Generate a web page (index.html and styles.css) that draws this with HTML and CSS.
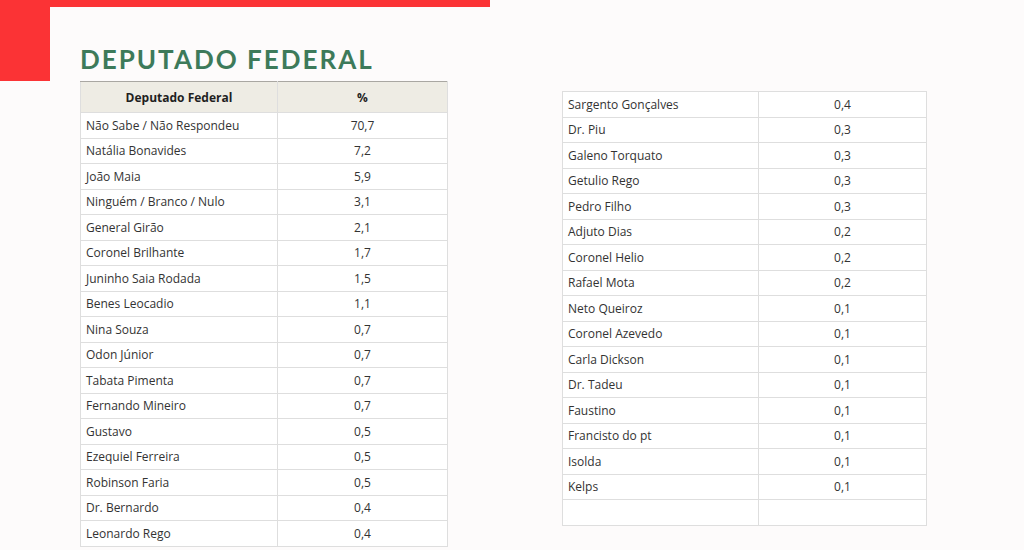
FILE: index.html
```html
<!DOCTYPE html>
<html lang="pt-BR">
<head>
<meta charset="utf-8">
<title>Deputado Federal</title>
<link rel="stylesheet" href="styles.css">
</head>
<body>
<div class="page">
  <div class="topbar"></div>
  <div class="content">
    <div class="redblock"></div>
    <div class="col-left">
      <h1 class="title">DEPUTADO FEDERAL</h1>
      <table class="tbl tbl-left">
        <colgroup><col class="c1"><col class="c2"></colgroup>
        <thead>
          <tr><th>Deputado Federal</th><th>%</th></tr>
        </thead>
        <tbody>
          <tr><td>Não Sabe / Não Respondeu</td><td>70,7</td></tr>
          <tr><td>Natália Bonavides</td><td>7,2</td></tr>
          <tr><td>João Maia</td><td>5,9</td></tr>
          <tr><td>Ninguém / Branco / Nulo</td><td>3,1</td></tr>
          <tr><td>General Girão</td><td>2,1</td></tr>
          <tr><td>Coronel Brilhante</td><td>1,7</td></tr>
          <tr><td>Juninho Saia Rodada</td><td>1,5</td></tr>
          <tr><td>Benes Leocadio</td><td>1,1</td></tr>
          <tr><td>Nina Souza</td><td>0,7</td></tr>
          <tr><td>Odon Júnior</td><td>0,7</td></tr>
          <tr><td>Tabata Pimenta</td><td>0,7</td></tr>
          <tr><td>Fernando Mineiro</td><td>0,7</td></tr>
          <tr><td>Gustavo</td><td>0,5</td></tr>
          <tr><td>Ezequiel Ferreira</td><td>0,5</td></tr>
          <tr><td>Robinson Faria</td><td>0,5</td></tr>
          <tr><td>Dr. Bernardo</td><td>0,4</td></tr>
          <tr><td>Leonardo Rego</td><td>0,4</td></tr>
        </tbody>
      </table>
    </div>
    <div class="col-right">
      <table class="tbl tbl-right">
        <colgroup><col class="c1"><col class="c2"></colgroup>
        <tbody>
          <tr><td>Sargento Gonçalves</td><td>0,4</td></tr>
          <tr><td>Dr. Piu</td><td>0,3</td></tr>
          <tr><td>Galeno Torquato</td><td>0,3</td></tr>
          <tr><td>Getulio Rego</td><td>0,3</td></tr>
          <tr><td>Pedro Filho</td><td>0,3</td></tr>
          <tr><td>Adjuto Dias</td><td>0,2</td></tr>
          <tr><td>Coronel Helio</td><td>0,2</td></tr>
          <tr><td>Rafael Mota</td><td>0,2</td></tr>
          <tr><td>Neto Queiroz</td><td>0,1</td></tr>
          <tr><td>Coronel Azevedo</td><td>0,1</td></tr>
          <tr><td>Carla Dickson</td><td>0,1</td></tr>
          <tr><td>Dr. Tadeu</td><td>0,1</td></tr>
          <tr><td>Faustino</td><td>0,1</td></tr>
          <tr><td>Francisto do pt</td><td>0,1</td></tr>
          <tr><td>Isolda</td><td>0,1</td></tr>
          <tr><td>Kelps</td><td>0,1</td></tr>
          <tr><td>&nbsp;</td><td>&nbsp;</td></tr>
        </tbody>
      </table>
    </div>
  </div>
</div>
</body>
</html>
```

FILE: styles.css
```css
* { box-sizing: border-box; }
html, body {
  margin: 0;
  padding: 0;
  background: #fdfbfb;
  width: 1024px;
  height: 550px;
  overflow: hidden;
}
.page {
  width: 1024px;
  height: 550px;
}
.topbar {
  width: 490px;
  height: 7px;
  background: #fb3335;
}
.content {
  display: flex;
  align-items: flex-start;
}
.redblock {
  width: 50px;
  height: 74px;
  background: #fb3335;
  flex: none;
}
.col-left {
  margin-left: 30px;
  display: flex;
  flex-direction: column;
}
.title {
  margin: 0;
  height: 74px;
  padding-top: 37px;
  font-family: Lato, "Open Sans", sans-serif;
  font-weight: 700;
  font-size: 26px;
  line-height: 30px;
  letter-spacing: 2px;
  color: #3d7a5a;
}
.col-right {
  margin-left: 114px;
  margin-top: 84px;
}
.tbl {
  border-collapse: collapse;
  table-layout: fixed;
  font-family: "Open Sans", sans-serif;
  font-size: 12px;
  color: #333333;
  background: #ffffff;
}
.tbl-left { width: 367px; }
.tbl-left .c1 { width: 197px; }
.tbl-left .c2 { width: 170px; }
.tbl-right { width: 364px; }
.tbl-right .c1 { width: 196px; }
.tbl-right .c2 { width: 168px; }
.tbl th, .tbl td {
  border: 1px solid #dedede;
  padding: 0 5px;
  height: 25.5px;
  white-space: nowrap;
}
.tbl td:first-child { text-align: left; }
.tbl td:last-child { text-align: center; }
.tbl th {
  background: #eeece4;
  font-weight: 700;
  text-align: center;
  height: 31px;
  border-top: 1px solid #a9a7a2;
  color: #1f1f1f;
}
```
